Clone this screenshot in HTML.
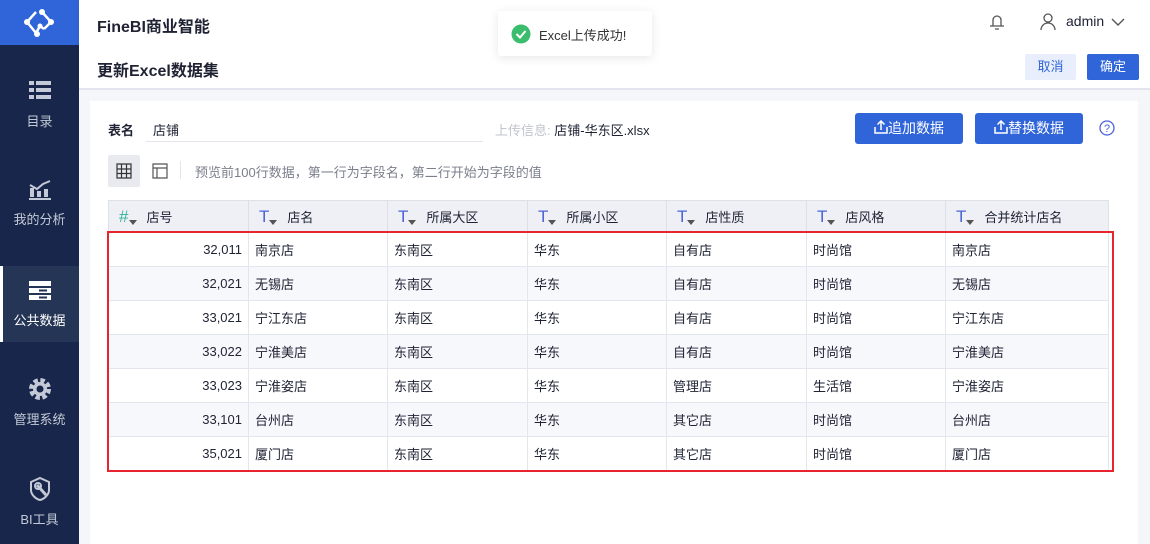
<!DOCTYPE html>
<html><head><meta charset="utf-8"><style>
*{margin:0;padding:0;box-sizing:border-box}
body{width:1150px;height:544px;overflow:hidden;font-family:"Liberation Sans","Noto Sans CJK SC",sans-serif;font-size:13px;color:#1e2233;background:#f5f6fa;position:relative}
.side{position:absolute;left:0;top:0;width:79px;height:544px;background:#17264a}
.logo{position:absolute;left:0;top:0;width:79px;height:45px;background:#2f65d9}
.nav{position:absolute;left:0;width:79px;text-align:center;color:#c3c9d6;font-size:13px}
.nav.act{background:#253556;color:#fff;border-left:3px solid #fff}
.hdr{position:absolute;left:79px;top:0;right:0;height:45px;background:#fff;box-shadow:0 2px 6px rgba(0,0,0,.06)}
.bar{position:absolute;left:79px;top:45px;right:0;height:45px;background:#fff;border-bottom:2px solid #e3e5ee}
.card{position:absolute;left:90px;top:101px;width:1048px;height:443px;background:#fff}
.btn{position:absolute;height:31px;border-radius:3px;background:#2f65d9;color:#fff;font-size:14px;line-height:31px;text-align:center}
table{position:absolute;left:108px;top:200px;border-collapse:collapse;table-layout:fixed;width:1000px}
td,th{height:34px;border:1px solid #e4e6ee;font-weight:normal;text-align:left;padding-left:6px;font-size:13px;white-space:nowrap}
th{height:32px;background:#eef0f5;border-color:#dde0e8;padding-left:10px}
tr:nth-child(odd) td{background:#f7f8fb}
td.n{text-align:right;padding-right:6px}
.t{color:#4a63d8;font-size:17px;position:relative;margin-right:18px}
.t:after{content:"";position:absolute;left:10px;top:13px;border:4px solid transparent;border-top:5px solid #555}
.g{color:#36b39a}
</style></head><body>
<div class="side">
<div class="logo"><svg width="79" height="45" viewBox="0 0 79 45"><g fill="none" stroke="#fff" stroke-width="2.5"><path d="M36 12 L27 22 L36 33 M42 12 L51 22 L44 29 M36 33 L40 26 L44 29"/></g><g fill="#fff"><circle cx="42" cy="12" r="3"/><circle cx="27" cy="22" r="3"/><circle cx="51" cy="22" r="3"/><circle cx="37" cy="34" r="3"/><circle cx="40" cy="26" r="2.5"/></g></svg></div>
<div class="nav" style="top:80px"><svg width="24" height="20"><g fill="#c3c9d6"><rect x="1" y="1" width="5" height="4"/><rect x="8" y="1" width="15" height="4"/><rect x="1" y="8" width="5" height="4"/><rect x="8" y="8" width="15" height="4"/><rect x="1" y="15" width="5" height="4"/><rect x="8" y="15" width="15" height="4"/></g></svg><div style="margin-top:8px">目录</div></div>
<div class="nav" style="top:179px"><svg width="24" height="22"><g fill="#c3c9d6"><rect x="2" y="9" width="4" height="9"/><rect x="9" y="12" width="4" height="6"/><rect x="16" y="10" width="4" height="8"/><rect x="1" y="19" width="22" height="2"/></g><path d="M2 6 L9 10 L15 5 L22 2" stroke="#c3c9d6" stroke-width="2" fill="none"/></svg><div style="margin-top:5px">我的分析</div></div>
<div class="nav act" style="top:266px;height:76px;padding-top:13px"><svg width="24" height="24" style="margin-left:-3px"><rect x="1" y="2" width="22" height="5" fill="#fff"/><rect x="1" y="9" width="22" height="5" fill="#fff"/><rect x="1" y="16" width="22" height="5" fill="#fff"/><rect x="11" y="10.5" width="8" height="2" fill="#253556"/><rect x="11" y="17.5" width="8" height="2" fill="#253556"/></svg><div style="margin-left:-3px;margin-top:4px">公共数据</div></div>
<div class="nav" style="top:376px"><svg width="26" height="26" viewBox="0 0 26 26"><circle cx="13" cy="13" r="8" fill="none" stroke="#c3c9d6" stroke-width="6" stroke-dasharray="4 2.3"/><circle cx="13" cy="13" r="7" fill="#c3c9d6"/><circle cx="13" cy="13" r="3.5" fill="#17264a"/></svg><div style="margin-top:4px">管理系统</div></div>
<div class="nav" style="top:476px"><svg width="24" height="26"><path d="M12 2 L21 6 V14 C21 19 16 23 12 24 C8 23 3 19 3 14 V6 Z" fill="none" stroke="#c3c9d6" stroke-width="2"/><path d="M9 9 L18 19" stroke="#c3c9d6" stroke-width="3"/><circle cx="10" cy="10" r="3" fill="none" stroke="#c3c9d6" stroke-width="2"/></svg><div style="margin-top:4px">BI工具</div></div>
</div>
<div class="hdr"><div style="position:absolute;left:18px;top:13px;font-size:16px;font-weight:bold">FineBI商业智能</div>
<svg style="position:absolute;left:910px;top:14px" width="16" height="16"><path d="M4 12 V6 A4 4 0 0 1 12 6 V12 M1 12 H15 M6 15 H10" stroke="#555" stroke-width="1.3" fill="none"/></svg>
<svg style="position:absolute;left:961px;top:13px" width="16" height="18"><circle cx="8" cy="5" r="4" stroke="#555" stroke-width="1.3" fill="none"/><path d="M1 17 A7 7 0 0 1 15 17" stroke="#555" stroke-width="1.3" fill="none"/></svg>
<div style="position:absolute;left:987px;top:13px;font-size:14px">admin</div>
<svg style="position:absolute;left:1032px;top:17px" width="14" height="10"><path d="M1 2 L7 8 L13 2" stroke="#555" stroke-width="1.4" fill="none"/></svg>
</div>
<div style="position:absolute;left:498px;top:11px;width:154px;height:45px;background:#fff;border-radius:3px;box-shadow:0 2px 10px rgba(0,0,0,.1);z-index:5">
<svg style="position:absolute;left:13px;top:13px" width="20" height="20"><circle cx="10" cy="10" r="9.5" fill="#3bbd6e"/><path d="M5.5 10 L9 13.5 L14.5 7" stroke="#fff" stroke-width="2" fill="none"/></svg>
<div style="position:absolute;left:41px;top:14px;font-size:13px;color:#333">Excel上传成功!</div></div>
<div class="bar"><div style="position:absolute;left:18px;top:12px;font-size:16px;font-weight:bold">更新Excel数据集</div>
<div style="position:absolute;left:946px;top:9px;width:51px;height:26px;background:#e8eefb;border-radius:2px;color:#2f65d9;text-align:center;line-height:26px;font-size:13px">取消</div>
<div style="position:absolute;left:1008px;top:9px;width:52px;height:26px;background:#2f65d9;border-radius:2px;color:#fff;text-align:center;line-height:26px;font-size:13px">确定</div></div>
<div class="card"></div>
<div style="position:absolute;left:108px;top:120px;font-weight:bold;font-size:13px">表名</div>
<div style="position:absolute;left:146px;top:120px;width:337px;height:22px;border-bottom:1px solid #e3e5ee;padding-left:7px">店铺</div>
<div style="position:absolute;left:495px;top:120px;color:#c0c4cc">上传信息: <span style="color:#1e2233">店铺-华东区.xlsx</span></div>
<div class="btn" style="left:855px;top:113px;width:108px"><svg width="14" height="14" style="vertical-align:-1px"><path d="M1 7 V13 H13 V7 M7 10 V1 M3.5 4.5 L7 1 L10.5 4.5" stroke="#fff" stroke-width="1.5" fill="none"/></svg>追加数据</div>
<div class="btn" style="left:975px;top:113px;width:108px"><svg width="14" height="14" style="vertical-align:-1px"><path d="M1 7 V13 H13 V7 M7 10 V1 M3.5 4.5 L7 1 L10.5 4.5" stroke="#fff" stroke-width="1.5" fill="none"/></svg>替换数据</div>
<svg style="position:absolute;left:1099px;top:120px" width="16" height="16"><circle cx="8" cy="8" r="7" stroke="#4a63d8" stroke-width="1.3" fill="none"/><text x="8" y="12" font-size="11" text-anchor="middle" fill="#4a63d8" font-family="Liberation Sans">?</text></svg>
<div style="position:absolute;left:108px;top:155px;width:32px;height:32px;background:#e8eaf0;border-radius:2px"><svg style="margin:8px" width="16" height="16"><path d="M1 1H15V15H1Z M1 6H15 M1 10.5H15 M5.5 1V15 M10.5 1V15" stroke="#333" stroke-width="1.2" fill="none"/></svg></div>
<svg style="position:absolute;left:152px;top:163px" width="16" height="16"><path d="M1 1H15V15H1Z M1 5H15 M5 5V15" stroke="#555" stroke-width="1.2" fill="none"/></svg>
<div style="position:absolute;left:180px;top:161px;width:1px;height:18px;background:#e3e5ee"></div>
<div style="position:absolute;left:195px;top:162px;color:#7a7f8c">预览前100行数据，第一行为字段名，第二行开始为字段的值</div>
<table>
<colgroup><col style="width:140px"><col style="width:139px"><col style="width:140px"><col style="width:139px"><col style="width:140px"><col style="width:139px"><col style="width:163px"></colgroup>
<tr><th><span class="t g">#</span>店号</th><th><span class="t">T</span>店名</th><th><span class="t">T</span>所属大区</th><th><span class="t">T</span>所属小区</th><th><span class="t">T</span>店性质</th><th><span class="t">T</span>店风格</th><th><span class="t">T</span>合并统计店名</th></tr>
<tr><td class="n">32,011</td><td>南京店</td><td>东南区</td><td>华东</td><td>自有店</td><td>时尚馆</td><td>南京店</td></tr>
<tr><td class="n">32,021</td><td>无锡店</td><td>东南区</td><td>华东</td><td>自有店</td><td>时尚馆</td><td>无锡店</td></tr>
<tr><td class="n">33,021</td><td>宁江东店</td><td>东南区</td><td>华东</td><td>自有店</td><td>时尚馆</td><td>宁江东店</td></tr>
<tr><td class="n">33,022</td><td>宁淮美店</td><td>东南区</td><td>华东</td><td>自有店</td><td>时尚馆</td><td>宁淮美店</td></tr>
<tr><td class="n">33,023</td><td>宁淮姿店</td><td>东南区</td><td>华东</td><td>管理店</td><td>生活馆</td><td>宁淮姿店</td></tr>
<tr><td class="n">33,101</td><td>台州店</td><td>东南区</td><td>华东</td><td>其它店</td><td>时尚馆</td><td>台州店</td></tr>
<tr><td class="n">35,021</td><td>厦门店</td><td>东南区</td><td>华东</td><td>其它店</td><td>时尚馆</td><td>厦门店</td></tr>
</table>
<div style="position:absolute;left:107px;top:231px;width:1007px;height:241px;border:2px solid #e8252e"></div>
</body></html>
